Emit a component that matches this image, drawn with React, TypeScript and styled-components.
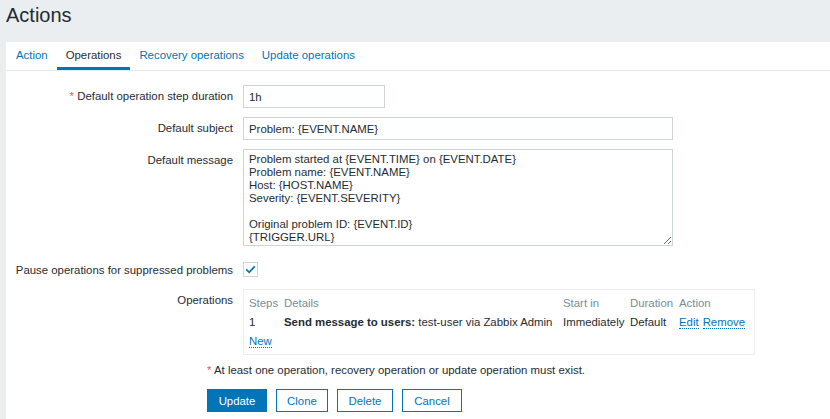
import React from "react";
import styled, { createGlobalStyle } from "styled-components";

const Global = createGlobalStyle`
  html, body { margin: 0; padding: 0; background: #ebeef0; }
  body { font-family: "Liberation Sans", Arial, sans-serif; font-size: 11.4px; color: #1f2c33; }
  * { box-sizing: border-box; }
`;

const Page = styled.div`
  width: 830px;
  height: 419px;
  display: flex;
  flex-direction: column;
  background: #ebeef0;
  overflow: hidden;
`;

const Header = styled.header`
  height: 42px;
  padding: 3px 0 0 6px;
`;

const Title = styled.h1`
  margin: 0;
  font-size: 20px;
  font-weight: normal;
  line-height: 24px;
  color: #1f2c33;
`;

const Panel = styled.main`
  flex: 1;
  margin-left: 6px;
  background: #fff;
  display: flex;
  flex-direction: column;
`;

const TabBar = styled.nav`
  display: flex;
  height: 29px;
  border-bottom: 1px solid #e6e9eb;
`;

const Tab = styled.a<{ $active?: boolean }>`
  padding: 0 9px;
  line-height: 27px;
  color: ${(p) => (p.$active ? "#1f2c33" : "#0275b8")};
  border-bottom: 3px solid ${(p) => (p.$active ? "#0275b8" : "transparent")};
  cursor: pointer;
  &:first-child { padding-left: 10px; }
`;

const Form = styled.form`
  display: grid;
  grid-template-columns: 227px 1fr;
  column-gap: 10px;
  row-gap: 9px;
  padding-top: 14px;
  align-items: start;
`;

const Label = styled.label<{ $pad?: number }>`
  text-align: right;
  line-height: 14px;
  padding-top: ${(p) => p.$pad ?? 4}px;
  white-space: nowrap;
`;

const Req = styled.span`
  color: #e45959;
`;

const TextInput = styled.input<{ $w: number }>`
  width: ${(p) => p.$w}px;
  height: 23px;
  border: 1px solid #cfd4d7;
  padding: 0 5px;
  font: inherit;
  color: #1f2c33;
  outline: none;
`;

const TextArea = styled.textarea`
  width: 430px;
  height: 97px;
  border: 1px solid #cfd4d7;
  padding: 3px 5px;
  font: inherit;
  line-height: 13px;
  color: #1f2c33;
  resize: both;
  outline: none;
`;

const CheckCell = styled.div`
  padding: 7px 0 3px;
`;

const Check = styled.span`
  display: flex;
  align-items: center;
  justify-content: center;
  width: 15px;
  height: 15px;
  border: 1px solid #cfd4d7;
  background: #fff;
`;

const OpsBox = styled.div`
  width: 512px;
  border: 1px solid #ebeef0;
  padding: 3px 5px 3px;
`;

const OpsTable = styled.table`
  border-collapse: collapse;
  table-layout: fixed;
  width: 100%;
`;

const Th = styled.th<{ $w?: number }>`
  text-align: left;
  font-weight: normal;
  color: #768d99;
  padding: 3px 0;
  line-height: 14px;
  width: ${(p) => (p.$w ? `${p.$w}px` : "auto")};
  white-space: nowrap;
`;

const Td = styled.td`
  padding: 2px 0 3px;
  line-height: 14px;
  white-space: nowrap;
  vertical-align: top;
`;

const Link = styled.a`
  color: #0275b8;
  border-bottom: 1px dotted #0275b8;
  cursor: pointer;
  margin-right: 4px;
`;

const Footer = styled.div`
  display: flex;
  flex-direction: column;
  padding: 8px 0 0 201px;
  gap: 12px;
`;

const Note = styled.div`
  line-height: 14px;
`;

const Buttons = styled.div`
  display: flex;
  gap: 9px;
`;

const Button = styled.button<{ $primary?: boolean; $w: number }>`
  width: ${(p) => p.$w}px;
  height: 23px;
  padding: 0;
  font: inherit;
  border: 1px solid #0275b8;
  background: ${(p) => (p.$primary ? "#0275b8" : "#fff")};
  color: ${(p) => (p.$primary ? "#fff" : "#0275b8")};
  cursor: pointer;
`;

export default function App() {
  const message =
    "Problem started at {EVENT.TIME} on {EVENT.DATE}\nProblem name: {EVENT.NAME}\nHost: {HOST.NAME}\nSeverity: {EVENT.SEVERITY}\n\nOriginal problem ID: {EVENT.ID}\n{TRIGGER.URL}";
  return (
    <Page>
      <Global />
      <Header>
        <Title>Actions</Title>
      </Header>
      <Panel>
        <TabBar>
          <Tab>Action</Tab>
          <Tab $active>Operations</Tab>
          <Tab>Recovery operations</Tab>
          <Tab>Update operations</Tab>
        </TabBar>
        <Form onSubmit={(e) => e.preventDefault()}>
          <Label>
            <Req>*</Req> Default operation step duration
          </Label>
          <TextInput $w={142} defaultValue="1h" />

          <Label>Default subject</Label>
          <TextInput $w={430} defaultValue="Problem: {EVENT.NAME}" />

          <Label>Default message</Label>
          <TextArea defaultValue={message} />

          <Label $pad={8}>Pause operations for suppressed problems</Label>
          <CheckCell>
            <Check>
              <svg width="11" height="9" viewBox="0 0 11 9">
                <path d="M1.2 4.4 L4.2 7.3 L9.8 1.4" fill="none" stroke="#0275b8" strokeWidth="1.8" />
              </svg>
            </Check>
          </CheckCell>

          <Label>Operations</Label>
          <OpsBox>
            <OpsTable>
              <thead>
                <tr>
                  <Th $w={35}>Steps</Th>
                  <Th $w={279}>Details</Th>
                  <Th $w={67}>Start in</Th>
                  <Th $w={49}>Duration</Th>
                  <Th>Action</Th>
                </tr>
              </thead>
              <tbody>
                <tr>
                  <Td>1</Td>
                  <Td>
                    <b>Send message to users:</b> test-user via Zabbix Admin
                  </Td>
                  <Td>Immediately</Td>
                  <Td>Default</Td>
                  <Td>
                    <Link>Edit</Link>
                    <Link>Remove</Link>
                  </Td>
                </tr>
                <tr>
                  <Td colSpan={5}>
                    <Link>New</Link>
                  </Td>
                </tr>
              </tbody>
            </OpsTable>
          </OpsBox>
        </Form>
        <Footer>
          <Note>
            <Req>*</Req> At least one operation, recovery operation or update operation must exist.
          </Note>
          <Buttons>
            <Button $primary $w={60}>Update</Button>
            <Button $w={52}>Clone</Button>
            <Button $w={56}>Delete</Button>
            <Button $w={60}>Cancel</Button>
          </Buttons>
        </Footer>
      </Panel>
    </Page>
  );
}
